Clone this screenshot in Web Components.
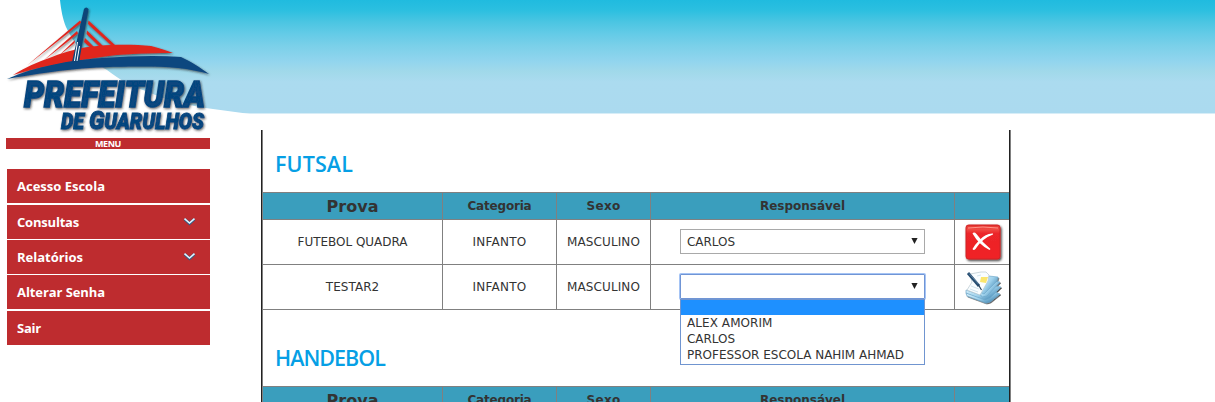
<!DOCTYPE html>
<html lang="pt-BR"><head><meta charset="utf-8"><title>Prefeitura de Guarulhos</title>
<style>
html{overflow:hidden}body{margin:0;background:#fff;color:#333;font:12px "DejaVu Sans",sans-serif;height:402px;overflow:hidden}
</style></head><body>
<school-page></school-page>
<script>
const define=(name,html,init)=>customElements.define(name,class extends HTMLElement{
  constructor(){super();const t=document.createElement('template');t.innerHTML=html;this.attachShadow({mode:'open'}).append(t.content.cloneNode(true));}
  connectedCallback(){if(init)init(this);}
});

/* Tracks its text so that the line has the given width */
define('fit-text','<style>:host{display:inline-block;white-space:nowrap}span{display:inline-block}</style><span><slot></slot></span>',el=>{
  const w=+el.getAttribute('w'),s=el.shadowRoot.querySelector('span'),n=el.textContent.length;
  const d=(w-s.getBoundingClientRect().width)/n;s.style.letterSpacing=d+'px';
});

define('city-logo',`<style>:host{display:block;width:250px;height:135px}svg{display:block}</style>
<svg width="250" height="135" viewBox="0 0 250 135"><defs>
<filter id="sh" x="-10%" y="-10%" width="120%" height="130%"><feDropShadow dx=".9" dy="1.2" stdDeviation=".8" flood-color="#222" flood-opacity=".7"/></filter></defs>
<path d="M0 0H60C61 10 63 20 66 27C74 45 88 60 107 70C120 80 131 86 143 90C165 100 195 107 213 109L250 114V135H0Z" fill="#fff"/>
<g filter="url(#sh)">
<g fill="#e0251f"><path d="M80 20.5L81.5 22.5L27 65.5Z"/><path d="M77 31L78 33.5L43 61Z"/><path d="M75 40L74.500 43L58 56.500Z"/>
<path d="M88.500 20.500L116 46H112L88 24Z"/><path d="M87 30.500L104 47H100L86.500 34Z"/><path d="M85 38L95 48H91L84 42Z"/>
<path d="M13 75C24 68 37 62 52 57C67 51 82 47 98 46C120 44 137 45 151 46C160 48 167 51 173 53C142 53 120 54 101 57C66 62 38 67 13 75Z"/></g>
<path d="M7 79C36 66 72 60 102 58C132 56 156 55 181 57C190 61 201 68 209 74C187 67 161 66 130 66.500C82 67 52 71 7 79Z" fill="#07467f"/>
<path d="M84 9Q86 6 88.500 9L79 62H72Z" fill="#0b4478"/><path d="M77.500 42L74.500 61M79.500 46L77 61" stroke="#fff" stroke-width="1"/>
<g font-family="Roboto,sans-serif" font-style="italic" font-weight="900" fill="#07467f" stroke="#07467f">
<text x="24" y="106.500" font-size="36" stroke-width="1.500" textLength="181" lengthAdjust="spacingAndGlyphs">PREFEITURA</text>
<text x="61" y="129" font-size="22" stroke-width=".9" textLength="143" lengthAdjust="spacingAndGlyphs">DE <tspan font-size="26">G</tspan>UARULHOS</text></g></g></svg>`);

define('page-banner',`<style>:host{display:block;height:113px;border-bottom:1px solid #d7edf7;background:linear-gradient(#20bbdf 0,#2bbfe0 10px,#4bc5e2 22px,#64cbe7 34px,#7bd0e9 46px,#93d5ee 62px,#a0d9ea 71px,#abdbef 82px,#abdaef 113px)}</style><slot></slot>`);

define('menu-item',`<style>:host{display:flex;align-items:center;justify-content:space-between;box-sizing:border-box;height:34px;margin-bottom:var(--gap,1px);padding:0 14px 0 10px;background:#be2c2f;color:#fff;font:bold 13px "Open Sans",sans-serif}
svg{display:none;margin-top:-1px}:host([more]) svg{display:block}</style>
<slot></slot><svg width="13" height="9" viewBox="0 0 13 9" fill="none"><path d="M1.500 2L6.500 6.500L11.500 2" stroke="#315e85" stroke-width="2.800"/><path d="M1.500 1.700L6.500 6L11.500 1.700" stroke="#e5f4ff" stroke-width="1.600"/></svg>`);

define('side-menu',`<style>:host{display:block;width:210px;padding:24px 0 0 6px;box-sizing:border-box}.h{height:11px;background:#be2c2f;color:#fff;text-align:center;font:bold 9px/11px "Open Sans",sans-serif}nav{padding:20px 0 0 1px}</style>
<div class="h"><fit-text w="26">MENU</fit-text></div><nav>
<menu-item style="--gap:2px"><fit-text w="88">Acesso Escola</fit-text></menu-item>
<menu-item more><fit-text w="62">Consultas</fit-text></menu-item>
<menu-item more><fit-text w="66">Relatórios</fit-text></menu-item>
<menu-item style="--gap:2px"><fit-text w="88">Alterar Senha</fit-text></menu-item>
<menu-item><fit-text w="24">Sair</fit-text></menu-item></nav>`);

define('section-title',`<style>:host{display:flex;align-items:flex-end;box-sizing:border-box;padding:0 0 12px 12px;color:#069fe5;font:600 21.5px/32px "Open Sans",sans-serif}</style><slot></slot>`);

define('table-row',`<style>:host{display:grid;grid-template-columns:180px 114px 94px 304px 54px;height:45px;box-sizing:border-box;border-bottom:1px solid #808080}
:host([head]){height:28px;border-top:1px solid #808080;background:#3a9ebd;font-weight:bold}
::slotted(*){display:flex;align-items:center;justify-content:center;border-right:1px solid #808080;position:relative}
::slotted(:last-child){border-right:0!important}</style><slot></slot>`);

define('table-head',`<style>:host{display:block}.p{font-size:16px}</style><table-row head><div class="p"><fit-text w="52">Prova</fit-text></div><div><fit-text w="64">Categoria</fit-text></div><div><fit-text w="34">Sexo</fit-text></div><div><fit-text w="85">Responsável</fit-text></div><div></div></table-row>`);

define('select-box',`<style>:host{display:flex;position:relative;box-sizing:border-box;width:245px;height:25px;border:1px solid #a9a9a9;background:#fff;align-items:center;justify-content:space-between;padding:0 6px;margin-top:-1px}
:host([open]){border-color:#7095d5;box-shadow:0 0 0 1px #a5c4f5;border-radius:1px}
svg{display:block;margin-top:-2px;margin-left:auto}</style><slot></slot><svg width="7" height="6"><path d="M.4 0H6.6L3.5 6Z" fill="#222"/></svg><slot name="list"></slot>`);

define('option-list',`<style>:host{display:block;position:absolute;z-index:2;left:-1px;top:24px;width:245px;height:66px;box-sizing:border-box;border:1px solid #7095d0;background:#fff;line-height:16px}.hi{height:15px;background:#1e90ff}.o{padding-left:6px;height:16px}</style>
<div class="hi"></div><div class="o"><fit-text w="85.500">ALEX AMORIM</fit-text></div><div class="o"><fit-text w="48">CARLOS</fit-text></div><div class="o"><fit-text w="217">PROFESSOR ESCOLA NAHIM AHMAD</fit-text></div>`);

define('delete-icon',`<style>:host{display:block;margin:1px 0 0 3px}svg{display:block}</style><svg width="40" height="40" viewBox="0 0 40 40"><defs><linearGradient id="r" x2="0" y2="1"><stop stop-color="#e5352f"/><stop offset=".13" stop-color="#f04a43"/><stop offset=".25" stop-color="#ec2529"/><stop offset="1" stop-color="#f02226"/></linearGradient><filter id="s"><feDropShadow dx="1.2" dy="1.5" stdDeviation=".8" flood-opacity=".75"/></filter></defs>
<rect x="2" y="2" width="34" height="34" rx="2.5" fill="url(#r)" stroke="#cf2224" filter="url(#s)"/><path d="M4 5Q19 3 34 5" stroke="#ff9388" fill="none"/>
<path d="M8.500 10.500Q10 8.500 12.500 11Q18 19 26.500 26L25.500 27Q15 22 8.500 10.500Z" fill="#fff"/><path d="M29 10.500Q22 10 15.500 17Q10.500 22 8.500 26Q9.500 28 11.500 26Q18 15.500 29 11.500Z" fill="#fff"/></svg>`);

define('edit-icon',`<style>:host{display:block;margin:3px 0 0 4px}svg{display:block}</style><svg width="40" height="40" viewBox="0 0 40 40"><defs><linearGradient id="b" x2="1" y2=".7"><stop stop-color="#e2f6ff"/><stop offset=".55" stop-color="#a0d2ec"/><stop offset="1" stop-color="#3e83b0"/></linearGradient><filter id="s"><feDropShadow dx=".8" dy="1" stdDeviation=".6" flood-opacity=".7"/></filter></defs>
<g filter="url(#s)" stroke="#6aa5c7" stroke-width=".6" fill="url(#b)"><path d="M2 24L22 30L31 23L36 25L26 33L22 34L3 27Z"/><path d="M2 21L20 27L31 17L37 18L26 29L21 31L2 24Z"/><path d="M15 23L28 12L36 13L23 27L18 28Z"/><path d="M14 22L25 7L34 8L33 12L20 25Z"/></g>
<path d="M6 5L17 3L22 3L25 6L24 12L16 26L3 21L8 13Z" fill="#f9fdff" stroke="#b7c7cf" stroke-width=".7"/><path d="M17 8L24 8L22 14L16 13Z" fill="#fae66d"/><path d="M7 17L15 20M6 20L14 23M13 7L17 6" stroke="#d2e4ed"/><path d="M4 4L15 17" stroke="#254c70" stroke-width="2.800"/><path d="M5 4.500L14.500 15" stroke="#7598b5" stroke-width=".7"/><path d="M14.500 16L17.500 21" stroke="#254057" stroke-width="1.200"/></svg>`);

define('events-panel',`<style>:host{display:block;width:750px;height:272px;box-sizing:border-box;border-left:1px solid #222;border-right:1px solid #808080;margin-left:51px;overflow:hidden}
main{width:746px;border-left:1px solid #808080;border-right:1px solid #222}.a{height:62px}.b{height:76px}</style><main>
<section-title class="a"><fit-text w="78">FUTSAL</fit-text></section-title><table-head></table-head>
<table-row><div><fit-text w="110">FUTEBOL QUADRA</fit-text></div><div><fit-text w="54">INFANTO</fit-text></div><div><fit-text w="73">MASCULINO</fit-text></div><div><select-box><fit-text w="48">CARLOS</fit-text></select-box></div><div><delete-icon></delete-icon></div></table-row>
<table-row><div><fit-text w="53.500">TESTAR2</fit-text></div><div><fit-text w="54">INFANTO</fit-text></div><div><fit-text w="73">MASCULINO</fit-text></div><div><select-box open><option-list slot="list"></option-list></select-box></div><div><edit-icon></edit-icon></div></table-row>
<section-title class="b"><fit-text w="110">HANDEBOL</fit-text></section-title><table-head></table-head></main>`);

define('school-page',`<style>:host{display:block}.l{display:flex}.m{padding-top:16px}side-menu{flex:none}</style><page-banner><city-logo></city-logo></page-banner><div class="l"><side-menu></side-menu><div class="m"><events-panel></events-panel></div></div>`);
</script></body></html>
